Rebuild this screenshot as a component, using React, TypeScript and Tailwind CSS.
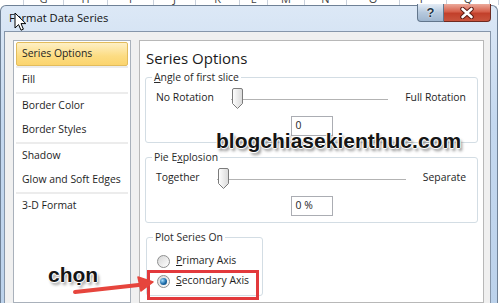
import { Fragment } from "react"

const listGroups = [
  ["Series Options"],
  ["Fill"],
  ["Border Color", "Border Styles"],
  ["Shadow", "Glow and Soft Edges"],
  ["3-D Format"],
]

const sheetCols = [
  { w: 24, l: "" },
  { w: 40, l: "G" },
  { w: 44, l: "H" },
  { w: 46, l: "I" },
  { w: 42, l: "J" },
  { w: 44, l: "K" },
  { w: 28, l: "L" },
  { w: 37, l: "M" },
  { w: 42, l: "N" },
  { w: 53, l: "O" },
  { w: 47, l: "P" },
  { w: 43, l: "Q" },
  { w: 9, l: "" },
]

function SliderThumb() {
  return (
    <svg width="11" height="21" viewBox="0 0 11 21" className="absolute left-[1px] top-[1px]">
      <defs>
        <linearGradient id="thumb" x1="0" x2="1" y1="0" y2="0">
          <stop offset="0" stopColor="#ffffff" />
          <stop offset="1" stopColor="#d9d9d9" />
        </linearGradient>
      </defs>
      <path
        d="M0.5 2 Q0.5 0.5 2 0.5 H9 Q10.5 0.5 10.5 2 V15.5 L5.5 20.5 L0.5 15.5 Z"
        fill="url(#thumb)"
        stroke="#7b7b7b"
      />
    </svg>
  )
}

function SliderRow({ left, right }: { left: string; right: string }) {
  return (
    <div className="mt-[3px] flex h-[22px] items-center gap-[17px] pl-[4px] pr-[5px]">
      <span>{left}</span>
      <div className="relative flex-1 self-stretch">
        <div className="mt-[12px] h-px bg-[#b3b3b3]" />
        <div className="h-px bg-white" />
        <SliderThumb />
      </div>
      <span>{right}</span>
    </div>
  )
}

function ValueBox({ value }: { value: string }) {
  return (
    <div className="mt-[7px] flex justify-center">
      <div className="flex h-[20px] w-[42px] items-center border border-[#abadb3] bg-white pl-[4px]">
        {value}
      </div>
    </div>
  )
}

function Radio({ checked }: { checked?: boolean }) {
  return (
    <span className="flex h-[13px] w-[13px] items-center justify-center rounded-full border border-[#8e8f8f] bg-[linear-gradient(135deg,#d6d6d6,#ffffff)]">
      {checked && (
        <span className="h-[7px] w-[7px] rounded-full bg-[radial-gradient(circle_at_35%_35%,#a8e0ff,#1a6aa8_55%,#0d3f6b)]" />
      )}
    </span>
  )
}

export default function App() {
  return (
    <div className="relative h-[303px] w-[499px] overflow-hidden bg-white font-['Open_Sans',sans-serif] text-[10.4px] text-[#1e1e1e]">
      {/* sheet header peeking out above the dialog */}
      <div className="flex h-[5px] overflow-hidden bg-white">
        {sheetCols.map((c, i) => (
          <div
            key={i}
            style={{ width: c.w }}
            className="flex shrink-0 justify-center border-r border-[#c9d1dc] text-[11px] leading-[11px] text-[#444]"
          >
            <span className="-mt-[7px]">{c.l}</span>
          </div>
        ))}
      </div>

      {/* dialog window */}
      <div className="flex h-[298px] w-[498px] flex-col rounded-t-[6px] border border-b-0 border-[#6f8196] bg-[linear-gradient(180deg,#dce8f6_0%,#c4d8ef_40%,#bcd2eb_100%)] pl-[3px] pr-[6px]">
        <div className="flex h-[25px] shrink-0 items-start">
          <span className="mt-[4px] pl-[5px] text-[11.2px] text-[#111]">Format Data Series</span>
          <div className="ml-auto -mt-[2px] flex">
            <div className="flex h-[18px] w-[27px] items-center justify-center rounded-bl-[4px] border border-t-0 border-[#62768c] bg-[linear-gradient(180deg,#e4ecf5,#b6c9de_50%,#9fb6cf)]">
              <span className="font-['Liberation_Sans',sans-serif] text-[13px] font-bold leading-none text-[#243447] [text-shadow:0_0_2px_#fff,0_0_1px_#fff]">
                ?
              </span>
            </div>
            <div className="flex h-[18px] w-[47px] items-center justify-center rounded-br-[4px] border border-l-0 border-t-0 border-[#6e2a20] bg-[linear-gradient(180deg,#eba99b,#d6604b_45%,#c2402b_55%,#c9543d)]">
              <svg width="14" height="12" viewBox="0 0 14 12">
                <path d="M2.5 2 L11.5 10 M11.5 2 L2.5 10" stroke="#5a1a12" strokeWidth="4.5" strokeLinecap="round" />
                <path d="M2.5 2 L11.5 10 M11.5 2 L2.5 10" stroke="#ffffff" strokeWidth="2.6" strokeLinecap="round" />
              </svg>
            </div>
          </div>
        </div>

        {/* client area */}
        <div className="flex flex-1 gap-[8px] border border-b-0 border-[#8696aa] bg-[#f0f0f0] pl-[8px] pr-[6px] pt-[8px]">
          {/* category list */}
          <div className="flex w-[118px] shrink-0 flex-col border border-[#a9b1bb] bg-white px-[2px] pt-[1px]">
            {listGroups.map((group, gi) => (
              <Fragment key={gi}>
                {gi > 0 && <div className="h-[2px] bg-[#ececec]" />}
                {group.map((name) => (
                  <div
                    key={name}
                    className={
                      name === "Series Options"
                        ? "flex h-[24px] items-center rounded-[2px] border border-[#e2bc5c] bg-[linear-gradient(180deg,#fef0c5,#fcdc82_60%,#fbd46e)] pl-[5px]"
                        : "flex h-[24px] items-center border border-transparent pl-[5px]"
                    }
                  >
                    {name}
                  </div>
                ))}
              </Fragment>
            ))}
          </div>

          {/* options panel */}
          <div className="flex flex-1 flex-col border border-[#b8b8b8] bg-white px-[5px]">
            <div className="pl-[1px] pt-[7px] text-[15px] leading-[20px] text-[#1a1a1a]">Series Options</div>

            <fieldset className="mt-[2px] rounded-[3px] border border-[#d3dde4] px-[6px] pb-[6px]">
              <legend className="px-[2px] leading-[14px] text-[#2a2a2a]">
                <span className="underline">A</span>ngle of first slice
              </legend>
              <SliderRow left="No Rotation" right="Full Rotation" />
              <ValueBox value="0" />
            </fieldset>

            <fieldset className="mt-[7px] rounded-[3px] border border-[#d3dde4] px-[6px] pb-[6px]">
              <legend className="px-[2px] leading-[14px] text-[#2a2a2a]">
                Pie E<span className="underline">x</span>plosion
              </legend>
              <SliderRow left="Together" right="Separate" />
              <ValueBox value="0 %" />
            </fieldset>

            <fieldset className="ml-[1px] mt-[7px] w-[117px] rounded-[3px] border border-[#d3dde4] px-[6px] pb-[4px]">
              <legend className="px-[2px] leading-[14px] text-[#2a2a2a]">Plot Series On</legend>
              <div className="mt-[7px] flex h-[20px] items-center gap-[6px] pl-[4px]">
                <Radio />
                <span>
                  <span className="underline">P</span>rimary Axis
                </span>
              </div>
              <div className="flex h-[20px] items-center gap-[6px] pl-[4px]">
                <Radio checked />
                <span>
                  <span className="underline">S</span>econdary Axis
                </span>
              </div>
            </fieldset>
          </div>
        </div>
      </div>

      {/* mouse pointer over the title */}
      <svg width="13" height="20" viewBox="0 0 13 20" className="absolute left-[14px] top-[12px]">
        <path
          d="M1 1 L1 16 L4.6 12.6 L7 18.2 L9.4 17.2 L7 11.6 L11.8 11.6 Z"
          fill="#ffffff"
          stroke="#000000"
          strokeWidth="1"
          strokeLinejoin="round"
        />
      </svg>

      {/* annotations */}
      <div className="absolute left-[216px] top-[129px] font-['Liberation_Sans',sans-serif] text-[21px] font-bold leading-[24px] text-[#151515] [text-shadow:1px_0_0_#fff,-1px_0_0_#fff,0_1px_0_#fff,0_-1px_0_#fff,2px_3px_3px_rgba(0,0,0,0.45)]">
        blogchiasekienthuc.com
      </div>

      <div className="absolute left-[48px] top-[263px] font-['Liberation_Sans',sans-serif] text-[21px] font-bold leading-[24px] text-[#151515] [text-shadow:1px_0_0_#fff,-1px_0_0_#fff,0_1px_0_#fff,0_-1px_0_#fff,2px_3px_3px_rgba(0,0,0,0.4)]">
        chọn
      </div>

      <div className="absolute left-[147px] top-[270px] h-[30px] w-[112px] border-[3px] border-[#e2393c]" />

      <svg width="100" height="30" viewBox="0 0 100 30" className="absolute left-[65px] top-[272px]">
        <path d="M10 20 L78 12.5" stroke="#e6453d" strokeWidth="4" strokeLinecap="round" />
        <path d="M88 10 L73 5 L76 19 Z" fill="#e6453d" stroke="#e6453d" strokeWidth="1.5" strokeLinejoin="round" />
      </svg>
    </div>
  )
}
